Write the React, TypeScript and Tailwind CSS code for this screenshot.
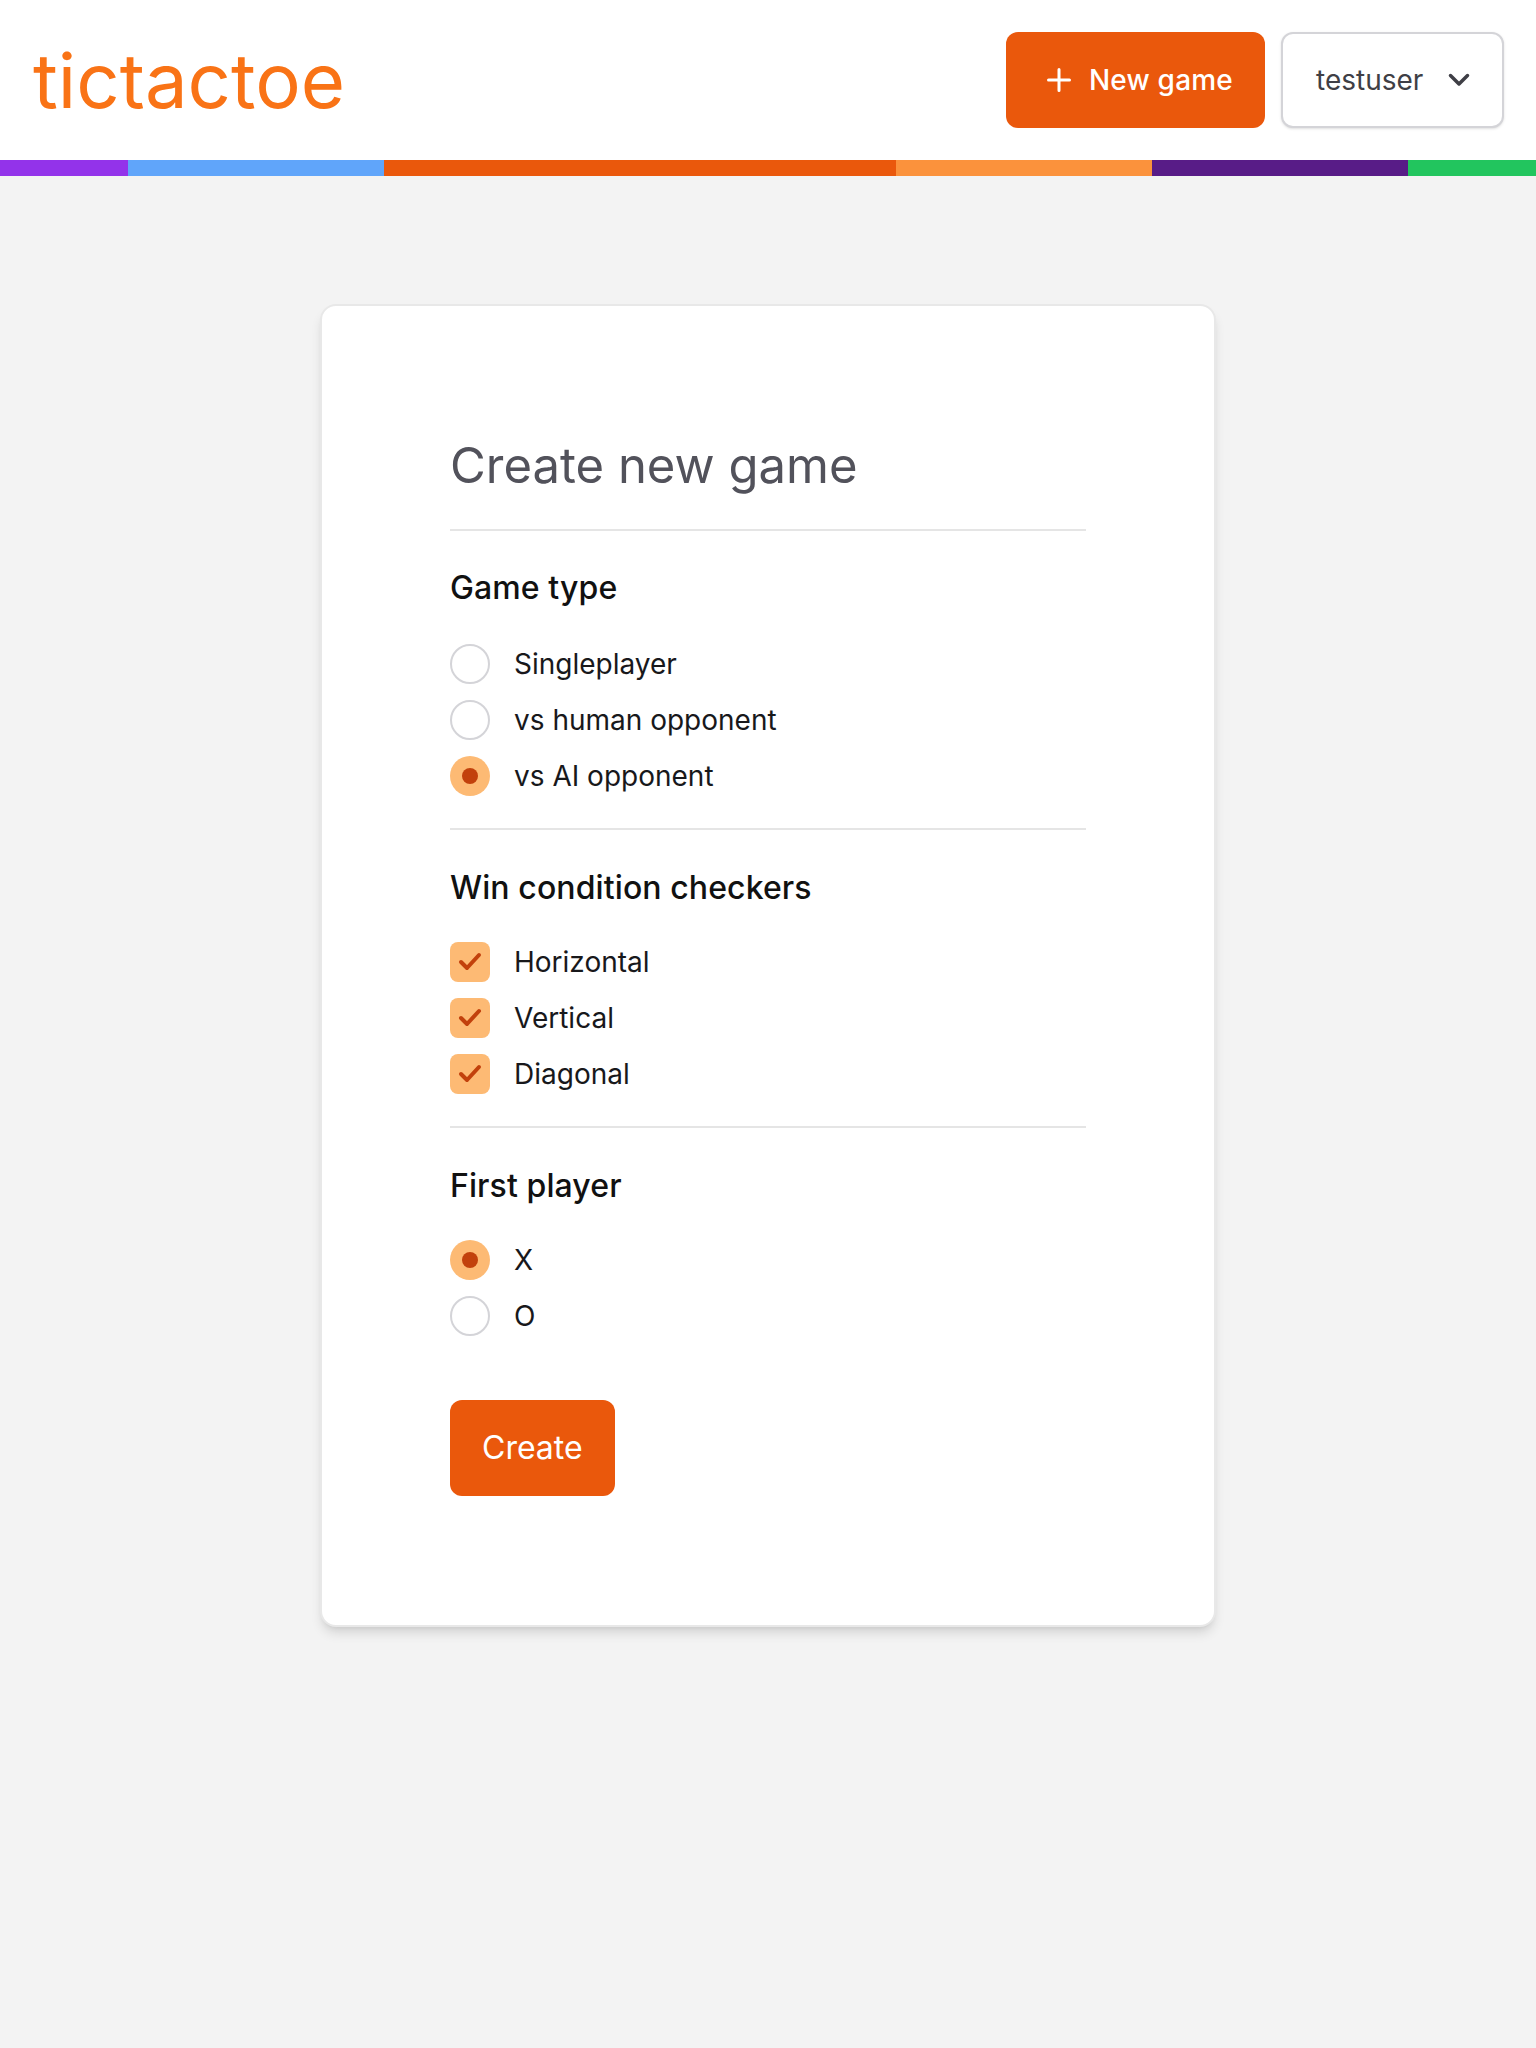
import React from "react";

function Radio({ checked, label }: { checked?: boolean; label: string }) {
  return (
    <div className="flex items-center gap-6 h-10">
      {checked ? (
        <span className="w-10 h-10 rounded-full bg-[#fdba74] flex items-center justify-center">
          <span className="w-4 h-4 rounded-full bg-[#c2410c]" />
        </span>
      ) : (
        <span className="w-10 h-10 rounded-full border-2 border-[#d4d4d8] bg-white" />
      )}
      <span className="text-[28px] leading-10 text-[#18181b]">{label}</span>
    </div>
  );
}

function Check({ label }: { label: string }) {
  return (
    <div className="flex items-center gap-6 h-10">
      <span className="w-10 h-10 rounded-lg bg-[#fdba74] flex items-center justify-center">
        <svg width="40" height="40" viewBox="0 0 40 40" fill="none">
          <polyline points="11,20 17,26 29,13" stroke="#c2410c" strokeWidth="4" strokeLinecap="round" strokeLinejoin="round" />
        </svg>
      </span>
      <span className="text-[28px] leading-10 text-[#18181b]">{label}</span>
    </div>
  );
}

export default function App() {
  return (
    <div className="min-h-[2048px] bg-[#f3f3f3] font-['Inter',sans-serif]">
      <header className="bg-white h-[160px] flex items-center justify-between pl-[33px] pr-8">
        <div className="text-[76px] leading-[80px] text-[#f97316]">tictactoe</div>
        <div className="flex items-center gap-4">
          <button className="h-24 pl-[41px] pr-8 rounded-xl bg-[#ea580c] text-white flex items-center gap-[18px] text-[28px] font-medium">
            <svg width="24" height="24" viewBox="0 0 24 24" fill="none">
              <path d="M12 1.5v21M1.5 12h21" stroke="white" strokeWidth="3" strokeLinecap="round" />
            </svg>
            <span className="tracking-[0.2px]">New game</span>
          </button>
          <button className="h-24 w-[223px] pl-[33px] pr-8 rounded-xl border-2 border-[#d4d4d8] bg-white text-[#3f3f46] flex items-center justify-between text-[28px] shadow-sm">
            <span>testuser</span>
            <svg width="22" height="14" viewBox="0 0 22 14" fill="none">
              <polyline points="2.5,2.5 11,11 19.5,2.5" stroke="#3f3f46" strokeWidth="3.5" strokeLinecap="round" strokeLinejoin="round" />
            </svg>
          </button>
        </div>
      </header>
      <div className="flex h-4">
        <div className="w-[128px] bg-[#9333ea]" />
        <div className="w-[256px] bg-[#60a5fa]" />
        <div className="w-[512px] bg-[#ea580c]" />
        <div className="w-[256px] bg-[#fb923c]" />
        <div className="w-[256px] bg-[#581c87]" />
        <div className="w-[128px] bg-[#22c55e]" />
      </div>
      <main className="flex justify-center pt-32">
        <div className="w-[896px] bg-white rounded-2xl border-2 border-[#e8e8e8] shadow-[0_8px_12px_-2px_rgba(0,0,0,0.12),0_4px_6px_-4px_rgba(0,0,0,0.1)] px-[128px] pt-[126px] pb-[129px]">
          <h1 className="text-[49px] leading-[64px] text-[#52525b] border-b-2 border-[#e5e5e5] pb-[31px] pt-[2px]">Create new game</h1>
          <section className="pt-[31px] pb-8 border-b-2 border-[#e5e5e5]">
            <h2 className="text-[32px] leading-[48px] font-medium text-[#111] tracking-[0.1px] pt-[2px]">Game type</h2>
            <div className="mt-[32px] flex flex-col gap-4">
              <Radio label="Singleplayer" />
              <Radio label="vs human opponent" />
              <Radio checked label="vs AI opponent" />
            </div>
          </section>
          <section className="py-8 border-b-2 border-[#e5e5e5]">
            <h2 className="text-[32px] leading-[48px] font-medium text-[#111] tracking-[0.1px] pt-[2px]">Win condition checkers</h2>
            <div className="mt-[30px] flex flex-col gap-4">
              <Check label="Horizontal" />
              <Check label="Vertical" />
              <Check label="Diagonal" />
            </div>
          </section>
          <section className="pt-8 pb-8">
            <h2 className="text-[32px] leading-[48px] font-medium text-[#111] tracking-[0.1px] pt-[2px]">First player</h2>
            <div className="mt-[30px] flex flex-col gap-4">
              <Radio checked label="X" />
              <Radio label="O" />
            </div>
          </section>
          <button className="mt-8 h-24 px-8 rounded-xl bg-[#ea580c] text-white text-[32px]">Create</button>
        </div>
      </main>
    </div>
  );
}
